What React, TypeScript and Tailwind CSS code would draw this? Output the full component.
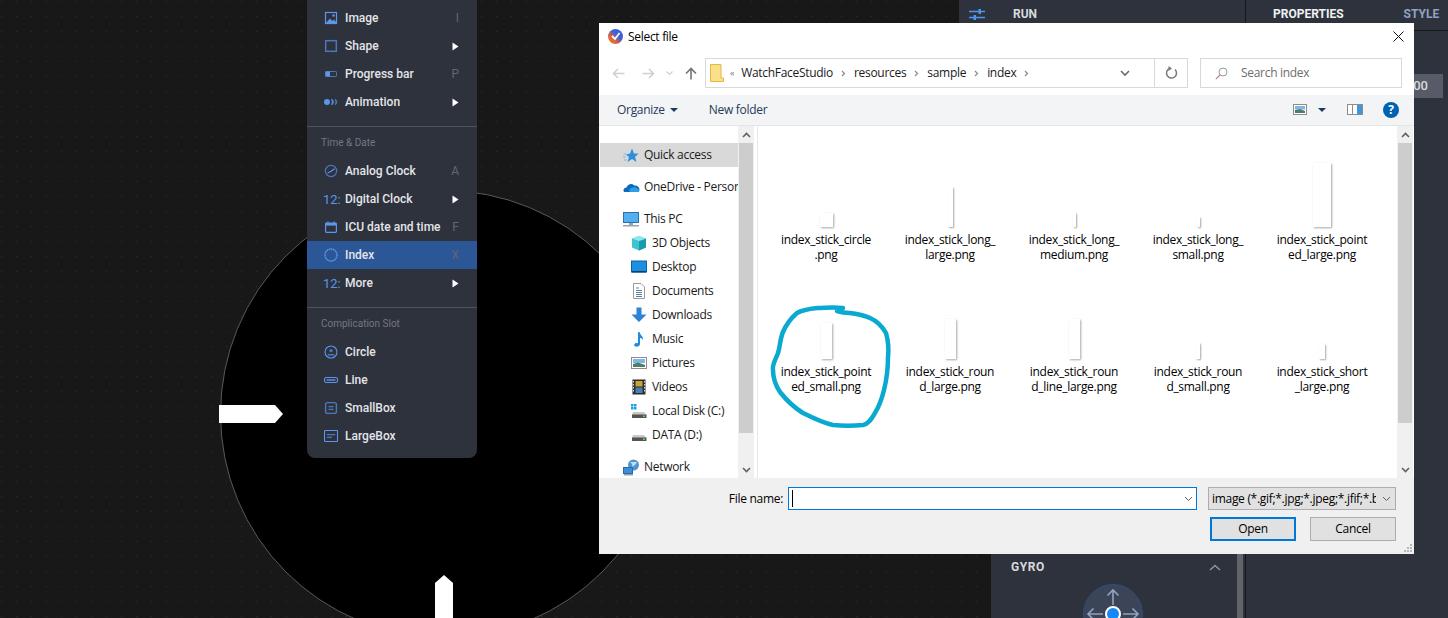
import React from "react";

const B = "#5b96ec";
const D = "#4b78b8";

const Tri = () => (
  <svg width="7" height="9" viewBox="0 0 7 9"><path d="M0.5 0.5L6.5 4.5L0.5 8.5Z" fill="#fff" /></svg>
);

const Ico = ({ children }: { children: React.ReactNode }) => (
  <svg width="16" height="16" viewBox="0 0 16 16" fill="none">{children}</svg>
);

const menuIcons: Record<string, React.ReactNode> = {
  image: (
    <Ico>
      <rect x="2.5" y="2.5" width="11" height="11" stroke={B} strokeWidth="1.2" />
      <path d="M3 13L7 8.5L9.5 11L11 9.5L13 12V13Z" fill={B} />
      <circle cx="10.5" cy="5.5" r="1.2" fill={B} />
    </Ico>
  ),
  shape: (
    <Ico>
      <rect x="2.7" y="2.7" width="10.6" height="10.6" stroke={D} strokeWidth="1.5" />
    </Ico>
  ),
  progress: (
    <Ico>
      <rect x="2.5" y="5.5" width="11" height="5" rx="0.8" stroke={D} strokeWidth="1" />
      <rect x="2.5" y="5.5" width="4.5" height="5" fill={B} />
    </Ico>
  ),
  animation: (
    <Ico>
      <circle cx="4" cy="8" r="3" fill={B} />
      <path d="M8.5 5.2A3 3 0 0 1 8.5 10.8A5 5 0 0 0 8.5 5.2Z" fill={B} stroke={B} strokeWidth="0.8" />
      <path d="M12 5.2A3 3 0 0 1 12 10.8A5 5 0 0 0 12 5.2Z" fill={D} stroke={D} strokeWidth="0.8" />
    </Ico>
  ),
  analog: (
    <Ico>
      <circle cx="8" cy="8" r="5.6" stroke={D} strokeWidth="1.2" />
      <path d="M8.2 8.3L11.5 5.8M8.2 8.3L4.5 10" stroke={B} strokeWidth="1.2" />
    </Ico>
  ),
  calendar: (
    <Ico>
      <rect x="2.6" y="4" width="10.8" height="9.4" rx="0.8" stroke={B} strokeWidth="1.2" />
      <rect x="2.6" y="4" width="10.8" height="2.6" fill={B} />
      <path d="M5 2.4V4M11 2.4V4" stroke={B} strokeWidth="1.2" />
    </Ico>
  ),
  index: (
    <Ico>
      <circle cx="8" cy="8" r="6" stroke={B} strokeWidth="1.4" strokeDasharray="1.6 0.5" />
    </Ico>
  ),
  circle: (
    <Ico>
      <circle cx="8" cy="8" r="6" stroke={B} strokeWidth="1.1" />
      <circle cx="8" cy="6.6" r="1.7" fill={D} />
      <path d="M4.8 10.8H11.2" stroke={D} strokeWidth="1.6" />
    </Ico>
  ),
  line: (
    <Ico>
      <rect x="1.5" y="5.5" width="13" height="5" rx="1.8" stroke={B} strokeWidth="1.1" />
      <rect x="3.5" y="7" width="9" height="2" fill={D} />
    </Ico>
  ),
  small: (
    <Ico>
      <rect x="2.6" y="2.6" width="10.8" height="10.8" rx="2" stroke={D} strokeWidth="1.4" />
      <path d="M5.5 6.6H10.5M5.5 9.4H10.5" stroke={D} strokeWidth="1.1" />
    </Ico>
  ),
  large: (
    <Ico>
      <rect x="1.5" y="2.5" width="13" height="11" rx="0.8" stroke={B} strokeWidth="1.1" />
      <path d="M3.8 6.6H12.2M3.8 9.4H9" stroke={D} strokeWidth="1.2" />
    </Ico>
  ),
};

function MenuRow({
  icon,
  label,
  hint,
  arrow,
  active,
}: {
  icon: string;
  label: string;
  hint?: string;
  arrow?: boolean;
  active?: boolean;
}) {
  return (
    <div className={`flex h-7 items-center pl-[16px] pr-[18px] ${active ? "bg-[#2b5796]" : ""}`}>
      <div className="flex w-[22px] shrink-0 items-center">
        {icon === "12" ? (
          <span className="text-[13px] leading-none text-[#5b96ec]">12:</span>
        ) : (
          menuIcons[icon]
        )}
      </div>
      <span className="flex-1 text-[12px] font-medium text-[#e3e5ea]">{label}</span>
      {hint && <span className="text-[12px] text-[#62666f]">{hint}</span>}
      {arrow && <Tri />}
    </div>
  );
}

const Sep = () => <div className="h-px bg-[#4f5361]" />;

function ContextMenu() {
  return (
    <div className="absolute left-[307px] top-0 h-[458px] w-[170px] rounded-b-[8px] bg-[#2e323c] pt-[4px] [font-family:Roboto,sans-serif]">
      <MenuRow icon="image" label="Image" hint="I" />
      <MenuRow icon="shape" label="Shape" arrow />
      <MenuRow icon="progress" label="Progress bar" hint="P" />
      <MenuRow icon="animation" label="Animation" arrow />
      <div className="h-[10px]" />
      <Sep />
      <div className="flex h-[30px] items-center pl-[14px] pt-[1px] text-[10px] text-[#737780]">Time &amp; Date</div>
      <MenuRow icon="analog" label="Analog Clock" hint="A" />
      <MenuRow icon="12" label="Digital Clock" arrow />
      <MenuRow icon="calendar" label="ICU date and time" hint="F" />
      <MenuRow icon="index" label="Index" hint="X" active />
      <MenuRow icon="12" label="More" arrow />
      <div className="h-[10px]" />
      <Sep />
      <div className="flex h-[30px] items-center pl-[14px] pt-[1px] text-[10px] text-[#737780]">Complication Slot</div>
      <MenuRow icon="circle" label="Circle" />
      <MenuRow icon="line" label="Line" />
      <MenuRow icon="small" label="SmallBox" />
      <MenuRow icon="large" label="LargeBox" />
    </div>
  );
}

const S = ({ w, h, children }: { w: number; h: number; children: React.ReactNode }) => (
  <svg width={w} height={h} viewBox={`0 0 ${w} ${h}`} fill="none" className="shrink-0">
    {children}
  </svg>
);

const navIcons: Record<string, React.ReactNode> = {
  quick: (
    <S w={16} h={16}>
      <path d="M9 1.5L11 6.5L15.5 6.5L12 10L13.5 15L9 12L4.5 15L6 10L3 7.5L7 6.5Z" fill="#2f8fdc" />
      <path d="M0.5 7H3M0 10H3M1 13H3.5" stroke="#7db9e8" />
    </S>
  ),
  onedrive: (
    <S w={17} h={16}>
      <path d="M1 13C-0.5 10.5 1.5 8.5 3.5 8.5C4.5 5 9 3.5 11.5 6.5C14 6 16.5 8 16.5 10.5C16.5 12 15.5 13 14 13Z" fill="#0f6cbd" />
      <path d="M7 13C5.5 11 7 9 9 9C10.5 7.5 14 8 14.5 10C16 10 16.8 11.5 16 13Z" fill="#2a9fe6" />
    </S>
  ),
  pc: (
    <S w={17} h={16}>
      <rect x="0.5" y="1.5" width="15" height="10" fill="#52b0f0" stroke="#2b6fb0" />
      <rect x="0" y="14" width="16" height="1.5" fill="#9aa3ad" />
      <rect x="6" y="12" width="4" height="2" fill="#9aa3ad" />
    </S>
  ),
  cube: (
    <S w={16} h={16}>
      <path d="M8 1L15 3.5V12.5L8 15.5L1 12.5V3.5Z" fill="#3cc4cf" />
      <path d="M8 6L15 3.5V12.5L8 15.5Z" fill="#1a9bb0" />
      <path d="M8 6L1 3.5L8 1L15 3.5Z" fill="#8ce8ee" />
    </S>
  ),
  desktop: (
    <S w={16} h={16}>
      <rect x="0.5" y="2" width="15" height="11" fill="#1b8fe0" stroke="#0f5fa8" />
      <rect x="1" y="12" width="14" height="1.5" fill="#0c3e75" />
    </S>
  ),
  docs: (
    <S w={16} h={16}>
      <path d="M2.5 0.5H10L13.5 4V15.5H2.5Z" fill="#fff" stroke="#9a9a9a" />
      <path d="M5 5H8M5 7.5H11M5 9.5H11M5 11.5H11M5 13.5H11" stroke="#5d7f9e" />
    </S>
  ),
  down: (
    <S w={16} h={16}>
      <path d="M5.5 0.5H10.5V7.5H15.5L8 15L0.5 7.5H5.5Z" fill="#2f83d4" />
    </S>
  ),
  music: (
    <S w={16} h={16}>
      <path d="M7 1H8.5C9 4 12.5 5 12 9C11 7.5 10 7 9 7V13C9 15 6.5 16 4.5 15.5C2.5 15 3 12.5 5 12C5.8 11.8 6.5 12 7 12.3Z" fill="#1e8ae0" />
    </S>
  ),
  pics: (
    <S w={16} h={16}>
      <rect x="0.5" y="2.5" width="15" height="11" fill="#fff" stroke="#8d8d8d" />
      <rect x="2" y="4" width="12" height="4" fill="#7fb8e6" />
      <path d="M2 12V9L7 7.5L14 10V12Z" fill="#4e7d6a" />
    </S>
  ),
  videos: (
    <S w={16} h={16}>
      <rect x="1.5" y="0.5" width="13" height="15" fill="#2d2d2d" />
      <rect x="4.5" y="2" width="7" height="5.5" fill="#c9a337" />
      <rect x="4.5" y="8.5" width="7" height="5.5" fill="#4a7fb5" />
      <path d="M2.5 2V14M13.5 2V14" stroke="#ddd" strokeDasharray="1.5 1.5" />
    </S>
  ),
  c: (
    <S w={16} h={16}>
      <rect x="0" y="1" width="2.5" height="2.5" fill="#19a0e8" />
      <rect x="3" y="1" width="2.5" height="2.5" fill="#19a0e8" />
      <rect x="0" y="4" width="2.5" height="2.5" fill="#19a0e8" />
      <rect x="3" y="4" width="2.5" height="2.5" fill="#19a0e8" />
      <path d="M2 9H13L15.5 12H1Z" fill="#c9c9c9" />
      <rect x="1" y="11.5" width="14.5" height="3.5" fill="#555" />
      <rect x="12" y="12.5" width="2" height="1.5" fill="#5fd35f" />
    </S>
  ),
  d: (
    <S w={16} h={16}>
      <path d="M2 8H13L15.5 11H1Z" fill="#c9c9c9" />
      <rect x="1" y="10.5" width="14.5" height="3.5" fill="#555" />
      <rect x="12" y="11.5" width="2" height="1.5" fill="#5fd35f" />
    </S>
  ),
  network: (
    <S w={17} h={17}>
      <circle cx="10.5" cy="6" r="5.5" fill="#4f95d6" />
      <path d="M7 3C9 4 10 6 9 8L12 6L14 3Z" fill="#c8dff2" />
      <rect x="0.5" y="8.5" width="9" height="6" fill="#3f8fd8" stroke="#2a6aa8" />
      <rect x="1" y="15" width="9" height="1.5" fill="#98a2ad" />
    </S>
  ),
};

function NavRow({ icon, label, sub, active }: { icon: string; label: string; sub?: boolean; active?: boolean }) {
  return (
    <div
      className={`flex h-6 items-center overflow-hidden whitespace-nowrap ${sub ? "pl-[31px]" : "pl-[23px]"} ${
        active ? "bg-[#d9d9d9]" : ""
      }`}
    >
      <div className={`flex shrink-0 items-center ${sub ? "w-[21px]" : "w-[21px]"}`}>{navIcons[icon]}</div>
      <span>{label}</span>
    </div>
  );
}

function Thumb({ w, h }: { w: number; h: number }) {
  return <div className="bg-white shadow-[1px_1px_2px_rgba(0,0,0,0.35)]" style={{ width: w, height: h }} />;
}

function Tile({ w, h, a, b }: { w: number; h: number; a: string; b: string }) {
  return (
    <div className="flex h-[132px] w-[124px] flex-col items-center">
      <div className="flex h-[84px] items-end justify-center">
        <Thumb w={w} h={h} />
      </div>
      <div className="mt-[5px] text-center leading-[15px] text-black">
        <div>{a}</div>
        <div>{b}</div>
      </div>
    </div>
  );
}

function Scrollbar({ thumb }: { thumb: number }) {
  return (
    <div className="flex w-[16px] shrink-0 flex-col bg-[#f0f0f0]">
      <div className="flex h-[17px] items-center justify-center">
        <S w={9} h={6}>
          <path d="M1 5L4.5 1.5L8 5" stroke="#606060" strokeWidth="1.6" />
        </S>
      </div>
      <div className="mx-px bg-[#cdcdcd]" style={{ height: thumb }} />
      <div className="flex-1" />
      <div className="flex h-[17px] items-center justify-center">
        <S w={9} h={6}>
          <path d="M1 1L4.5 4.5L8 1" stroke="#606060" strokeWidth="1.6" />
        </S>
      </div>
    </div>
  );
}

function Crumb({ t }: { t: string }) {
  return (
    <>
      <span>{t}</span>
      <S w={5} h={7}>
        <path d="M1 1L3.5 3.5L1 6" stroke="#8a8a8a" strokeWidth="1.2" />
      </S>
    </>
  );
}

function Dialog() {
  return (
    <div className="absolute left-[599px] top-[23px] flex h-[531px] w-[815px] flex-col bg-white text-[12px] text-[#1a1a1a] [font-family:'Open_Sans',sans-serif] tracking-[-0.3px]">
      {/* title bar */}
      <div className="flex h-[27px] shrink-0 items-center pl-[9px] pr-[10px]">
        <svg width="15" height="15" viewBox="0 0 15 15">
          <defs>
            <linearGradient id="ap" x1="0" y1="1" x2="1" y2="0">
              <stop offset="0.3" stopColor="#e8692c" />
              <stop offset="0.6" stopColor="#3f5fd8" />
            </linearGradient>
          </defs>
          <circle cx="7.5" cy="7.5" r="7.5" fill="url(#ap)" />
          <path d="M4 7L7 10L11.5 4" stroke="#fff" strokeWidth="1.8" fill="none" />
        </svg>
        <span className="ml-[5px] flex-1 text-black">Select file</span>
        <S w={11} h={11}>
          <path d="M0.5 0.5L10.5 10.5M10.5 0.5L0.5 10.5" stroke="#111" strokeWidth="1" />
        </S>
      </div>
      {/* nav row */}
      <div className="flex h-[45px] shrink-0 items-start pt-[8px]">
        <div className="flex h-[30px] w-[106px] items-center pl-[13px]">
          <S w={13} h={11}>
            <path d="M12.5 5.5H1.5M6 1L1.5 5.5L6 10" stroke="#cfcfcf" strokeWidth="1.5" />
          </S>
          <div className="ml-[17px]">
            <S w={13} h={11}>
              <path d="M0.5 5.5H11.5M7 1L11.5 5.5L7 10" stroke="#cfcfcf" strokeWidth="1.5" />
            </S>
          </div>
          <div className="ml-[11px]">
            <S w={7} h={5}>
              <path d="M0.5 0.5L3.5 3.5L6.5 0.5" stroke="#cfcfcf" strokeWidth="1.2" />
            </S>
          </div>
          <div className="ml-[12px]">
            <S w={12} h={13}>
              <path d="M6 12.5V1.5M1 6.5L6 1.5L11 6.5" stroke="#757575" strokeWidth="1.6" />
            </S>
          </div>
        </div>
        <div className="flex h-[30px] w-[483px] items-center border border-[#d9d9d9] pl-[4px]">
          <svg width="14" height="18" viewBox="0 0 14 18">
            <path d="M0.5 0.5H11V14H13.5V17.5H0.5Z" fill="#fbe08a" stroke="#e3b843" />
          </svg>
          <span className="ml-[6px] text-[9px] text-[#777]">«</span>
          <div className="ml-[7px] flex flex-1 items-center gap-[8px]">
            <Crumb t="WatchFaceStudio" />
            <Crumb t="resources" />
            <Crumb t="sample" />
            <Crumb t="index" />
          </div>
          <div className="flex h-full w-[34px] items-center justify-start pl-[0px]">
            <S w={10} h={7}>
              <path d="M1 1L5 5L9 1" stroke="#6b6b6b" strokeWidth="1.6" />
            </S>
          </div>
          <div className="flex h-full w-[33px] items-center justify-center border-l border-[#d9d9d9]">
            <svg width="13" height="14" viewBox="0 0 13 14" fill="none">
              <path d="M10 3.5A5 5 0 1 1 4.5 2.5" stroke="#7a7a7a" strokeWidth="1.5" />
              <path d="M3.5 0L7 2.5L3.5 5Z" fill="#7a7a7a" />
            </svg>
          </div>
        </div>
        <div className="ml-[12px] flex h-[30px] w-[202px] items-center border border-[#d9d9d9] pl-[14px] text-[#6d6d6d]">
          <svg width="13" height="13" viewBox="0 0 13 13" fill="none">
            <circle cx="8" cy="5" r="4" stroke="#9a9a9a" />
            <path d="M5 8L0.8 12.2" stroke="#b08d7a" strokeWidth="1.2" />
          </svg>
          <span className="ml-[13px]">Search index</span>
        </div>
      </div>
      {/* toolbar */}
      <div className="flex h-[31px] shrink-0 items-center border-b border-[#e5e5e5] bg-[#f3f4f6] pb-px pl-[18px] pr-[15px] text-[#1e3a5c]">
        <span>Organize</span>
        <div className="ml-[5px]">
          <S w={8} h={4}>
            <path d="M0 0H8L4 4Z" fill="#1e3a5c" />
          </S>
        </div>
        <span className="ml-[31px] flex-1">New folder</span>
        <svg width="14" height="11" viewBox="0 0 14 11">
          <rect x="0.5" y="0.5" width="13" height="10" fill="#fff" stroke="#8d8d8d" />
          <rect x="2" y="2" width="10" height="3.5" fill="#7fb8e6" />
          <path d="M2 9V6L7 5L12 7V9Z" fill="#4e7d6a" />
        </svg>
        <div className="ml-[11px]">
          <S w={8} h={4}>
            <path d="M0 0H8L4 4Z" fill="#1e3a5c" />
          </S>
        </div>
        <div className="ml-[21px]">
          <svg width="16" height="11" viewBox="0 0 16 11">
            <rect x="0.5" y="0.5" width="15" height="10" fill="#fff" stroke="#8d8d8d" />
            <rect x="10" y="1" width="5" height="9" fill="#3c97e0" />
            <path d="M5.5 1V10" stroke="#8d8d8d" />
          </svg>
        </div>
        <div className="ml-[20px] flex h-4 w-4 items-center justify-center rounded-full bg-[#0063b1] text-[12px] font-bold leading-none text-white">
          ?
        </div>
      </div>
      {/* body */}
      <div className="flex min-h-0 flex-1">
        <div className="flex w-[155px] shrink-0 pl-px">
          <div className="w-[138px] shrink-0 pt-[17px]">
            <NavRow icon="quick" label="Quick access" active />
            <div className="h-2" />
            <NavRow icon="onedrive" label="OneDrive - Personal" />
            <div className="h-2" />
            <NavRow icon="pc" label="This PC" />
            <NavRow icon="cube" label="3D Objects" sub />
            <NavRow icon="desktop" label="Desktop" sub />
            <NavRow icon="docs" label="Documents" sub />
            <NavRow icon="down" label="Downloads" sub />
            <NavRow icon="music" label="Music" sub />
            <NavRow icon="pics" label="Pictures" sub />
            <NavRow icon="videos" label="Videos" sub />
            <NavRow icon="c" label="Local Disk (C:)" sub />
            <NavRow icon="d" label="DATA (D:)" sub />
            <div className="h-2" />
            <NavRow icon="network" label="Network" />
          </div>
          <Scrollbar thumb={290} />
        </div>
        <div className="ml-[3px] flex-1 border-l border-[#e8e8e8] pl-[6px] pt-[17px]">
          <div className="grid grid-cols-[repeat(5,124px)]">
            <Tile w={13} h={14} a="index_stick_circle" b=".png" />
            <Tile w={5} h={40} a="index_stick_long_" b="large.png" />
            <Tile w={3} h={14} a="index_stick_long_" b="medium.png" />
            <Tile w={3} h={10} a="index_stick_long_" b="small.png" />
            <Tile w={18} h={64} a="index_stick_point" b="ed_large.png" />
            <Tile w={11} h={36} a="index_stick_point" b="ed_small.png" />
            <Tile w={11} h={40} a="index_stick_roun" b="d_large.png" />
            <Tile w={11} h={40} a="index_stick_roun" b="d_line_large.png" />
            <Tile w={4} h={16} a="index_stick_roun" b="d_small.png" />
            <Tile w={6} h={15} a="index_stick_short" b="_large.png" />
          </div>
        </div>
        <div className="mr-px flex">
          <Scrollbar thumb={280} />
        </div>
      </div>
      {/* footer */}
      <div className="relative h-[76px] shrink-0 bg-[#f0f0f0] pr-[18px] pt-[9px]">
        <div className="flex h-[23px] items-center justify-end">
          <span className="mr-[5px] text-black">File name:</span>
          <div className="flex h-full w-[409px] items-center border border-[#0078d7] bg-white pl-[3px] pr-[3px]">
            <div className="h-[17px] w-px bg-black" />
            <div className="flex-1" />
            <S w={9} h={6}>
              <path d="M1 1L4.5 4.5L8 1" stroke="#606060" strokeWidth="1" />
            </S>
          </div>
          <div className="ml-[11px] flex h-full w-[188px] items-center border border-[#adadad] bg-[#e1e1e1] pl-[3px] pr-[4px] text-black">
            <span className="flex-1 overflow-hidden whitespace-nowrap">image (*.gif;*.jpg;*.jpeg;*.jfif;*.bmp</span>
            <div className="ml-[6px]">
              <S w={9} h={6}>
                <path d="M1 1L4.5 4.5L8 1" stroke="#606060" strokeWidth="1" />
              </S>
            </div>
          </div>
        </div>
        <div className="mt-[7px] flex justify-end gap-[14px] text-black">
          <div className="flex h-[24px] w-[86px] items-center justify-center border-2 border-[#0078d7] bg-[#e1e1e1]">Open</div>
          <div className="flex h-[24px] w-[86px] items-center justify-center border border-[#adadad] bg-[#e1e1e1]">Cancel</div>
        </div>
        <div className="absolute bottom-[2px] right-[2px]">
          <svg width="8" height="8" viewBox="0 0 8 8" fill="#b5b5b5">
            <rect x="6" y="0" width="2" height="2" />
            <rect x="3" y="3" width="2" height="2" />
            <rect x="6" y="3" width="2" height="2" />
            <rect x="0" y="6" width="2" height="2" />
            <rect x="3" y="6" width="2" height="2" />
            <rect x="6" y="6" width="2" height="2" />
          </svg>
        </div>
      </div>
    </div>
  );
}

export default function App() {
  return (
    <div className="relative flex h-[618px] w-[1448px] overflow-hidden bg-[#181818] bg-[radial-gradient(circle,#2e2e2e_0.8px,transparent_1px)] bg-[length:15px_15px] bg-[position:-6px_-6px] [font-family:Roboto,sans-serif]">
      {/* canvas */}
      <div className="relative w-[959px] shrink-0">
        <div className="absolute left-[220px] top-[190px] h-[448px] w-[448px] rounded-full border border-[#5a5a5a] bg-black" />
        <svg className="absolute left-[219px] top-[405px]" width="64" height="18" viewBox="0 0 64 18">
          <path d="M0 0H56L64 9L56 18H0Z" fill="#fff" />
        </svg>
        <svg className="absolute left-[435px] top-[575px]" width="18" height="43" viewBox="0 0 18 43">
          <path d="M9 0L18 8V43H0V8Z" fill="#fff" />
        </svg>
      </div>
      {/* right side */}
      <div className="flex min-w-0 flex-1 flex-col">
        <div className="flex h-[31px] shrink-0">
          <div className="flex w-[287px] items-center border-r border-[#15171b] bg-[#2e323c] pb-[3px] pl-[10px]">
            <svg width="16" height="13" viewBox="0 0 16 13" fill="none">
              <path d="M0 3.5H16M0 9.5H16" stroke="#4f93ee" strokeWidth="1.6" />
              <rect x="9.5" y="1" width="2.5" height="5" fill="#4f93ee" />
              <rect x="4.5" y="7" width="2.5" height="5" fill="#4f93ee" />
            </svg>
            <span className="ml-[28px] text-[12px] font-bold text-[#d8dade]">RUN</span>
          </div>
          <div className="flex flex-1 items-center overflow-hidden border-b border-[#15171b] bg-[#2e323c] pb-[3px] pl-[27px] text-[12px] font-bold">
            <span className="text-[#eef0f3]">PROPERTIES</span>
            <span className="ml-[60px] text-[#8fa3c4]">STYLE</span>
          </div>
        </div>
        <div className="flex min-h-0 flex-1">
          <div className="w-[32px] shrink-0" />
          <div className="flex w-[255px] shrink-0 overflow-hidden border-r border-[#15171b] bg-[#2e323c]">
            <div className="min-w-0 flex-1 pt-[527px]">
              <div className="flex items-center justify-between pl-[20px] pr-[16px]">
                <span className="text-[12px] font-bold tracking-[0.6px] text-[#d8dade]">GYRO</span>
                <svg width="12" height="7" viewBox="0 0 12 7" fill="none">
                  <path d="M1 6L6 1.5L11 6" stroke="#8d92a0" strokeWidth="1.6" />
                </svg>
              </div>
              <div className="mt-[8px] flex justify-center pr-[2px]">
                <svg width="60" height="60" viewBox="0 0 60 60" className="shrink-0" fill="none">
                  <circle cx="30" cy="30" r="29.5" fill="#3b4557" stroke="#2f4e80" />
                  <path d="M30 21V6M24.5 11.5L30 6L35.5 11.5" stroke="#93a3c0" strokeWidth="1.6" />
                  <path d="M20 30H5M10.5 24.5L5 30L10.5 35.5" stroke="#93a3c0" strokeWidth="1.6" />
                  <path d="M40 30H55M49.5 24.5L55 30L49.5 35.5" stroke="#93a3c0" strokeWidth="1.6" />
                  <circle cx="30" cy="30" r="7" fill="#1688f5" stroke="#fff" strokeWidth="2" />
                </svg>
              </div>
            </div>
            <div className="mr-[2px] w-[6px] shrink-0 self-stretch bg-[#62646a]" />
          </div>
          <div className="flex-1 bg-[#2e323c] pt-[43px] pl-[29px] pr-[5px]">
            <div className="flex h-[24px] items-center justify-end bg-[#575b68] pr-[15px] text-[13px] font-medium text-[#d8dade]">
              100
            </div>
          </div>
        </div>
      </div>
      <ContextMenu />
      <Dialog />
      <svg className="absolute left-0 top-0" width="1448" height="618" fill="none">
        <path
          d="M843 308C832 307 825 308 817 308C808 309 802 310 797 313C790 319 786 325 783 332C780 339 780 347 778 353C775 361 772 365 773 370C773 378 776 386 780 392C787 401 795 408 803 413C813 418 823 423 833 425C843 426 853 426 863 425C869 424 872 418 875 413C880 405 882 398 884 390C887 378 888 367 888 357C889 348 888 340 886 333C882 326 877 321 870 318C864 315 857 314 850 313C845 313 840 312 837 311"
          stroke="#0aa9cf"
          strokeWidth="4.5"
          strokeLinecap="round"
        />
      </svg>
    </div>
  );
}
